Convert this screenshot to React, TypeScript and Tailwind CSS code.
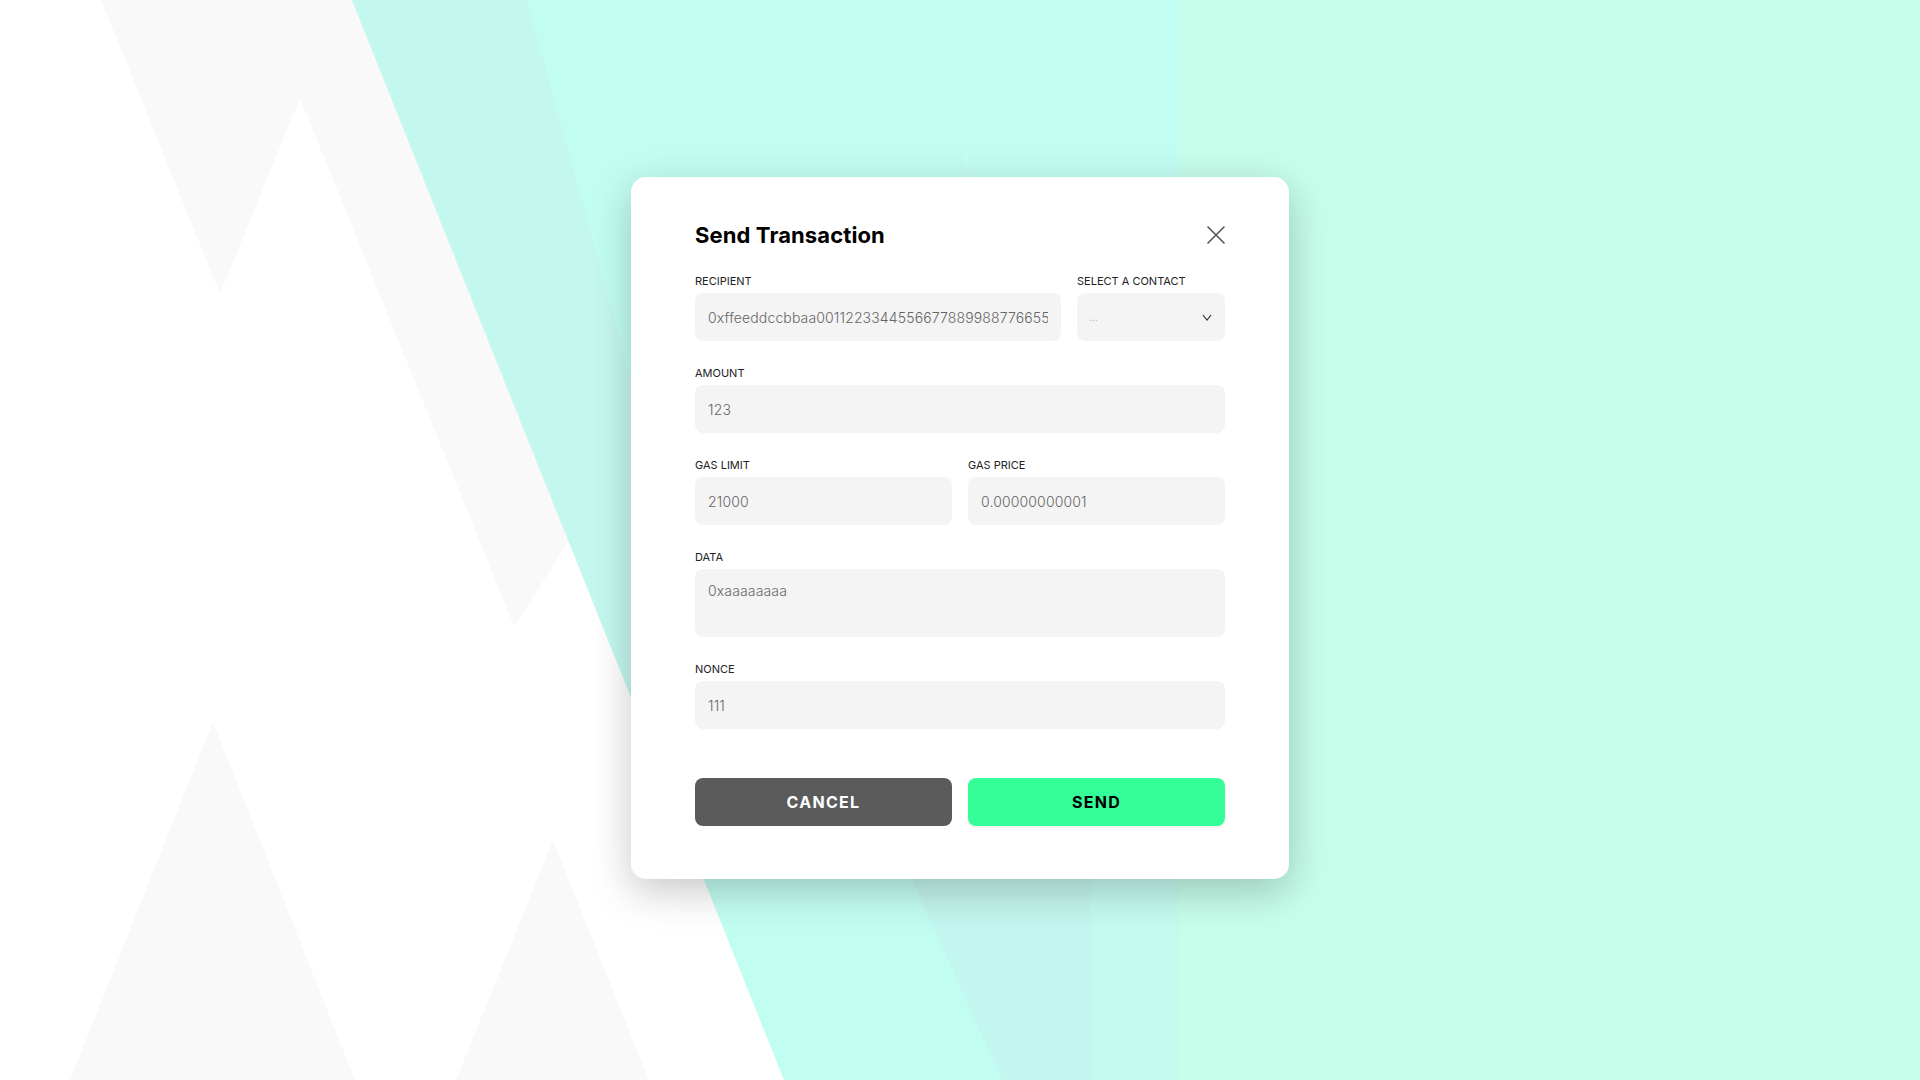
import React from "react";

function Backdrop() {
  return (
    <svg
      className="absolute inset-0 h-full w-full"
      viewBox="0 0 1920 1080"
      preserveAspectRatio="none"
    >
      {/* grey W shapes on the white side */}
      <polygon points="101,0 400,0 570,540 514,626 300,98 220,294" fill="#f9f9f9" />
      <polygon points="213,722 355,1080 70,1080" fill="#f9f9f9" />
      <polygon points="553,840 649,1080 456,1080" fill="#f9f9f9" />
      {/* teal side */}
      <polygon points="352,0 1920,0 1920,1080 784,1080" fill="#c2fdf1" />
      <polygon points="1180,0 1920,0 1920,1080 1180,1080" fill="#c6fdeb" />
      <polygon points="352,0 527,0 718,697 631,697" fill="#c4f8ef" />
      <polygon points="804,640 1091,640 1091,1080 1002,1080" fill="#c3f6ee" />
      <polygon points="1091,640 1180,640 1180,1080 1091,1080" fill="#c4fbef" />
      <polygon points="967,150 1060,640 870,640" fill="#c7fdf3" />
    </svg>
  );
}

function Field({
  label,
  className = "",
  children,
}: {
  label: string;
  className?: string;
  children: React.ReactNode;
}) {
  return (
    <div className={className}>
      <label className="mb-1 block text-[11px] leading-4 font-normal uppercase text-[#222]">
        {label}
      </label>
      {children}
    </div>
  );
}

const inputCls =
  "h-12 w-full rounded-lg bg-[#f4f4f4] px-[13px] text-[14px] font-light tracking-[0.01em] text-[#666] outline-none";

export default function App() {
  return (
    <div className="relative h-[1080px] w-full overflow-hidden bg-white font-['Inter',sans-serif]">
      <Backdrop />
      <div className="relative flex justify-center pt-[177px]">
        <div className="w-[658px] rounded-[15px] bg-white px-16 pt-[44px] pb-[53px] shadow-[0_12px_40px_rgba(0,0,0,0.22)]">
          <div className="flex items-center justify-between">
            <h1 className="text-[22px] leading-[28px] font-bold tracking-[0.005em] text-black">
              Send Transaction
            </h1>
            <button className="flex h-[18px] w-[18px] items-center justify-center">
              <svg width="18" height="18" viewBox="0 0 18 18" fill="none">
                <path
                  d="M1 1L17 17M17 1L1 17"
                  stroke="#555"
                  strokeWidth="1.6"
                  strokeLinecap="round"
                />
              </svg>
            </button>
          </div>

          <div className="mt-6 flex flex-col gap-6">
            <div className="flex gap-4">
              <Field label="Recipient" className="w-[366px]">
                <input
                  readOnly
                  className={inputCls}
                  value="0xffeeddccbbaa00112233445566778899887766554433221100"
                />
              </Field>
              <Field label="Select a contact" className="flex-1">
                <div className="flex h-12 items-center justify-between rounded-lg bg-[#f4f4f4] pr-[13px] pl-[12px]">
                  <span className="text-[10px] text-[#aaa]">...</span>
                  <svg width="10" height="7" viewBox="0 0 10 7" fill="none">
                    <path d="M1 1L5 6L9 1" stroke="#333" strokeWidth="1.2" />
                  </svg>
                </div>
              </Field>
            </div>

            <Field label="Amount">
              <input readOnly className={inputCls} value="123" />
            </Field>

            <div className="grid grid-cols-2 gap-4">
              <Field label="Gas limit">
                <input readOnly className={inputCls} value="21000" />
              </Field>
              <Field label="Gas price">
                <input readOnly className={inputCls} value="0.00000000001" />
              </Field>
            </div>

            <Field label="Data">
              <textarea
                readOnly
                className="block h-[68px] w-full resize-none rounded-lg bg-[#f4f4f4] px-[13px] pt-[12px] text-[14px] leading-5 font-light tracking-[0.01em] text-[#666] outline-none"
                value="0xaaaaaaaa"
              />
            </Field>

            <Field label="Nonce">
              <input readOnly className={inputCls} value="111" />
            </Field>
          </div>

          <div className="mt-[49px] grid grid-cols-2 gap-4">
            <button className="h-12 rounded-lg bg-[#5b5b5b] text-[16px] font-bold tracking-[0.08em] text-white">
              CANCEL
            </button>
            <button className="h-12 rounded-lg bg-[#35fe98] text-[16px] font-bold tracking-[0.08em] text-black shadow-[0_2px_3px_rgba(0,0,0,0.06)]">
              SEND
            </button>
          </div>
        </div>
      </div>
    </div>
  );
}
